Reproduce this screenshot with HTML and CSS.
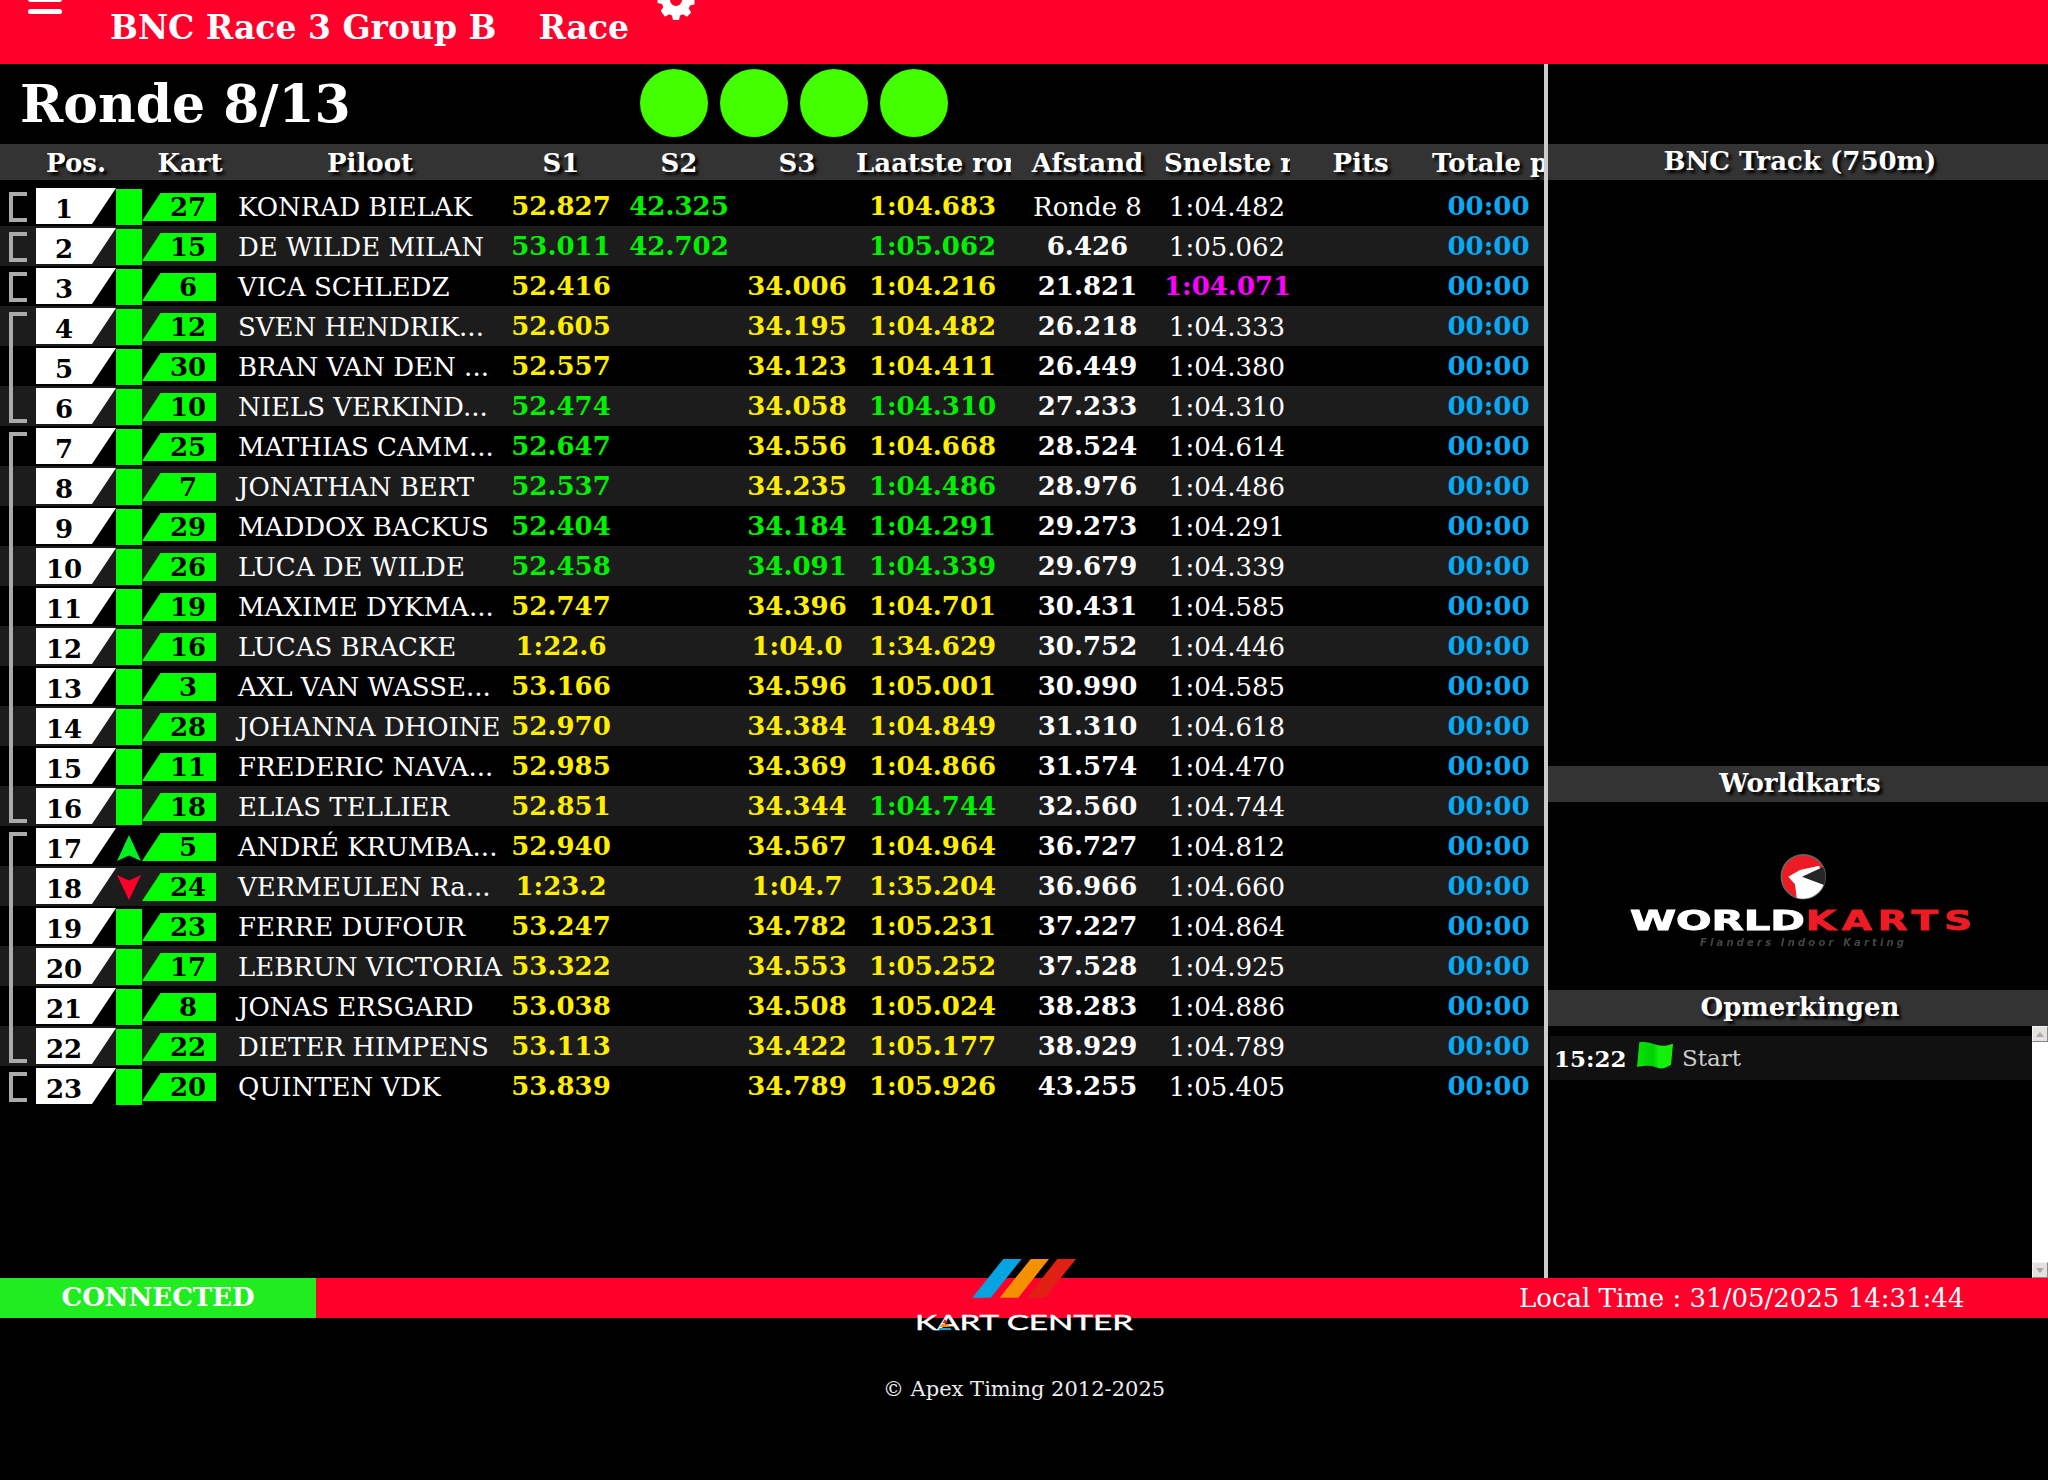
FILE: index.html
```html
<!DOCTYPE html>
<html lang="nl">
<head>
<meta charset="utf-8">
<title>Apex Timing</title>
<link rel="stylesheet" href="styles.css">
</head>
<body>
<div class="page">
<header class="topbar">
  <div class="burger"><span></span><span></span><span></span></div>
  <div class="title race-name">BNC Race 3 Group B</div>
  <div class="title session">Race</div>
  <svg class="gear" viewBox="0 0 34 34"><path fill="#fff" fill-rule="evenodd" d="M14 0h6l1 4.500 3 1.300 4-2.500 4.200 4.200-2.500 4 1.300 3 4.500 1v6l-4.500 1-1.300 3 2.500 4-4.200 4.200-4-2.500-3 1.300-1 4.500h-6l-1-4.500-3-1.300-4 2.500L1.800 28l2.500-4-1.300-3L-1.500 20v-6L3 13l1.300-3-2.500-4L6 1.800l4 2.500 3-1.300zM17 11a6 6 0 1 0 0 12 6 6 0 0 0 0-12z"/></svg>
</header>
<main class="main">
  <section class="board">
    <div class="status">
      <h1 class="lap">Ronde 8/13</h1>
      <div class="lights"><i></i><i></i><i></i><i></i></div>
    </div>
    <div class="row head">
      <div class="hc pos-h">Pos.</div><div class="hc kart-h">Kart</div><div class="hc">Piloot</div><div class="hc">S1</div><div class="hc">S2</div><div class="hc">S3</div><div class="hc cut">Laatste ronde</div><div class="hc">Afstand</div><div class="hc cut">Snelste ronde</div><div class="hc">Pits</div><div class="hc cut last">Totale pits</div>
    </div>
    <div class="rows">
      <div class="row"><div class="br one"></div><div class="pos"><b>1</b></div><div class="st"></div><div class="kn"><b>27</b></div><div class="nm">KONRAD BIELAK</div><div class="t y">52.827</div><div class="t g">42.325</div><div class="t"></div><div class="t y lt">1:04.683</div><div class="t w lite">Ronde 8</div><div class="t lite w">1:04.482</div><div class="t"></div><div class="t b">00:00</div></div>
      <div class="row"><div class="br one"></div><div class="pos"><b>2</b></div><div class="st"></div><div class="kn"><b>15</b></div><div class="nm">DE WILDE MILAN</div><div class="t g">53.011</div><div class="t g">42.702</div><div class="t"></div><div class="t g lt">1:05.062</div><div class="t w">6.426</div><div class="t lite w">1:05.062</div><div class="t"></div><div class="t b">00:00</div></div>
      <div class="row"><div class="br one"></div><div class="pos"><b>3</b></div><div class="st"></div><div class="kn"><b>6</b></div><div class="nm">VICA SCHLEDZ</div><div class="t y">52.416</div><div class="t"></div><div class="t y">34.006</div><div class="t y lt">1:04.216</div><div class="t w">21.821</div><div class="t m">1:04.071</div><div class="t"></div><div class="t b">00:00</div></div>
      <div class="row"><div class="br top"></div><div class="pos"><b>4</b></div><div class="st"></div><div class="kn"><b>12</b></div><div class="nm">SVEN HENDRIK...</div><div class="t y">52.605</div><div class="t"></div><div class="t y">34.195</div><div class="t y lt">1:04.482</div><div class="t w">26.218</div><div class="t lite w">1:04.333</div><div class="t"></div><div class="t b">00:00</div></div>
      <div class="row"><div class="br mid"></div><div class="pos"><b>5</b></div><div class="st"></div><div class="kn"><b>30</b></div><div class="nm">BRAN VAN DEN ...</div><div class="t y">52.557</div><div class="t"></div><div class="t y">34.123</div><div class="t y lt">1:04.411</div><div class="t w">26.449</div><div class="t lite w">1:04.380</div><div class="t"></div><div class="t b">00:00</div></div>
      <div class="row"><div class="br bot"></div><div class="pos"><b>6</b></div><div class="st"></div><div class="kn"><b>10</b></div><div class="nm">NIELS VERKIND...</div><div class="t g">52.474</div><div class="t"></div><div class="t y">34.058</div><div class="t g lt">1:04.310</div><div class="t w">27.233</div><div class="t lite w">1:04.310</div><div class="t"></div><div class="t b">00:00</div></div>
      <div class="row"><div class="br top"></div><div class="pos"><b>7</b></div><div class="st"></div><div class="kn"><b>25</b></div><div class="nm">MATHIAS CAMM...</div><div class="t g">52.647</div><div class="t"></div><div class="t y">34.556</div><div class="t y lt">1:04.668</div><div class="t w">28.524</div><div class="t lite w">1:04.614</div><div class="t"></div><div class="t b">00:00</div></div>
      <div class="row"><div class="br mid"></div><div class="pos"><b>8</b></div><div class="st"></div><div class="kn"><b>7</b></div><div class="nm">JONATHAN BERT</div><div class="t g">52.537</div><div class="t"></div><div class="t y">34.235</div><div class="t g lt">1:04.486</div><div class="t w">28.976</div><div class="t lite w">1:04.486</div><div class="t"></div><div class="t b">00:00</div></div>
      <div class="row"><div class="br mid"></div><div class="pos"><b>9</b></div><div class="st"></div><div class="kn"><b>29</b></div><div class="nm">MADDOX BACKUS</div><div class="t g">52.404</div><div class="t"></div><div class="t g">34.184</div><div class="t g lt">1:04.291</div><div class="t w">29.273</div><div class="t lite w">1:04.291</div><div class="t"></div><div class="t b">00:00</div></div>
      <div class="row"><div class="br mid"></div><div class="pos"><b>10</b></div><div class="st"></div><div class="kn"><b>26</b></div><div class="nm">LUCA DE WILDE</div><div class="t g">52.458</div><div class="t"></div><div class="t g">34.091</div><div class="t g lt">1:04.339</div><div class="t w">29.679</div><div class="t lite w">1:04.339</div><div class="t"></div><div class="t b">00:00</div></div>
      <div class="row"><div class="br mid"></div><div class="pos"><b>11</b></div><div class="st"></div><div class="kn"><b>19</b></div><div class="nm">MAXIME DYKMA...</div><div class="t y">52.747</div><div class="t"></div><div class="t y">34.396</div><div class="t y lt">1:04.701</div><div class="t w">30.431</div><div class="t lite w">1:04.585</div><div class="t"></div><div class="t b">00:00</div></div>
      <div class="row"><div class="br mid"></div><div class="pos"><b>12</b></div><div class="st"></div><div class="kn"><b>16</b></div><div class="nm">LUCAS BRACKE</div><div class="t y">1:22.6</div><div class="t"></div><div class="t y">1:04.0</div><div class="t y lt">1:34.629</div><div class="t w">30.752</div><div class="t lite w">1:04.446</div><div class="t"></div><div class="t b">00:00</div></div>
      <div class="row"><div class="br mid"></div><div class="pos"><b>13</b></div><div class="st"></div><div class="kn"><b>3</b></div><div class="nm">AXL VAN WASSE...</div><div class="t y">53.166</div><div class="t"></div><div class="t y">34.596</div><div class="t y lt">1:05.001</div><div class="t w">30.990</div><div class="t lite w">1:04.585</div><div class="t"></div><div class="t b">00:00</div></div>
      <div class="row"><div class="br mid"></div><div class="pos"><b>14</b></div><div class="st"></div><div class="kn"><b>28</b></div><div class="nm">JOHANNA DHOINE</div><div class="t y">52.970</div><div class="t"></div><div class="t y">34.384</div><div class="t y lt">1:04.849</div><div class="t w">31.310</div><div class="t lite w">1:04.618</div><div class="t"></div><div class="t b">00:00</div></div>
      <div class="row"><div class="br mid"></div><div class="pos"><b>15</b></div><div class="st"></div><div class="kn"><b>11</b></div><div class="nm">FREDERIC NAVA...</div><div class="t y">52.985</div><div class="t"></div><div class="t y">34.369</div><div class="t y lt">1:04.866</div><div class="t w">31.574</div><div class="t lite w">1:04.470</div><div class="t"></div><div class="t b">00:00</div></div>
      <div class="row"><div class="br bot"></div><div class="pos"><b>16</b></div><div class="st"></div><div class="kn"><b>18</b></div><div class="nm">ELIAS TELLIER</div><div class="t y">52.851</div><div class="t"></div><div class="t y">34.344</div><div class="t g lt">1:04.744</div><div class="t w">32.560</div><div class="t lite w">1:04.744</div><div class="t"></div><div class="t b">00:00</div></div>
      <div class="row"><div class="br top"></div><div class="pos"><b>17</b></div><div class="st none"><svg class="arrow" viewBox="0 0 24 26"><path fill="#00f020" d="M12 0 24 26 12 20.500 0 26z"/></svg></div><div class="kn"><b>5</b></div><div class="nm">ANDRÉ KRUMBA...</div><div class="t y">52.940</div><div class="t"></div><div class="t y">34.567</div><div class="t y lt">1:04.964</div><div class="t w">36.727</div><div class="t lite w">1:04.812</div><div class="t"></div><div class="t b">00:00</div></div>
      <div class="row"><div class="br mid"></div><div class="pos"><b>18</b></div><div class="st none"><svg class="arrow" viewBox="0 0 24 26"><path fill="#ff002b" d="M12 25 24 0 12 5.500 0 0z"/></svg></div><div class="kn"><b>24</b></div><div class="nm">VERMEULEN Ra...</div><div class="t y">1:23.2</div><div class="t"></div><div class="t y">1:04.7</div><div class="t y lt">1:35.204</div><div class="t w">36.966</div><div class="t lite w">1:04.660</div><div class="t"></div><div class="t b">00:00</div></div>
      <div class="row"><div class="br mid"></div><div class="pos"><b>19</b></div><div class="st"></div><div class="kn"><b>23</b></div><div class="nm">FERRE DUFOUR</div><div class="t y">53.247</div><div class="t"></div><div class="t y">34.782</div><div class="t y lt">1:05.231</div><div class="t w">37.227</div><div class="t lite w">1:04.864</div><div class="t"></div><div class="t b">00:00</div></div>
      <div class="row"><div class="br mid"></div><div class="pos"><b>20</b></div><div class="st"></div><div class="kn"><b>17</b></div><div class="nm">LEBRUN VICTORIA</div><div class="t y">53.322</div><div class="t"></div><div class="t y">34.553</div><div class="t y lt">1:05.252</div><div class="t w">37.528</div><div class="t lite w">1:04.925</div><div class="t"></div><div class="t b">00:00</div></div>
      <div class="row"><div class="br mid"></div><div class="pos"><b>21</b></div><div class="st"></div><div class="kn"><b>8</b></div><div class="nm">JONAS ERSGARD</div><div class="t y">53.038</div><div class="t"></div><div class="t y">34.508</div><div class="t y lt">1:05.024</div><div class="t w">38.283</div><div class="t lite w">1:04.886</div><div class="t"></div><div class="t b">00:00</div></div>
      <div class="row"><div class="br bot"></div><div class="pos"><b>22</b></div><div class="st"></div><div class="kn"><b>22</b></div><div class="nm">DIETER HIMPENS</div><div class="t y">53.113</div><div class="t"></div><div class="t y">34.422</div><div class="t y lt">1:05.177</div><div class="t w">38.929</div><div class="t lite w">1:04.789</div><div class="t"></div><div class="t b">00:00</div></div>
      <div class="row"><div class="br one"></div><div class="pos"><b>23</b></div><div class="st"></div><div class="kn"><b>20</b></div><div class="nm">QUINTEN VDK</div><div class="t y">53.839</div><div class="t"></div><div class="t y">34.789</div><div class="t y lt">1:05.926</div><div class="t w">43.255</div><div class="t lite w">1:05.405</div><div class="t"></div><div class="t b">00:00</div></div>
    </div>
  </section>
  <aside class="side">
    <div class="spacer-top"></div>
    <h2 class="sh">BNC Track (750m)</h2>
    <div class="track"></div>
    <h2 class="sh">Worldkarts</h2>
    <div class="sponsor">
      <svg class="wk" viewBox="0 0 500 188" width="500" height="188">
        <circle cx="255.300" cy="74.700" r="22" fill="#ed1c24" stroke="#666" stroke-width="1.500"/>
        <path fill="#fff" d="M271.300 63.700 252 68 240.300 74.700 247 82.300 248.700 95.700A22 22 0 0 0 275.500 83z"/>
        <path fill="#262626" d="M275 65 254 74.700 276 83A22 22 0 0 0 275 65z"/>
        <text class="wk-w" x="82" y="128" textLength="175" lengthAdjust="spacingAndGlyphs">WORLD</text>
        <text class="wk-r" x="258" y="128" textLength="172" lengthAdjust="spacingAndGlyphs">KARTS</text>
        <text class="wk-s" x="152" y="144" textLength="204" lengthAdjust="spacing">Flanders Indoor Karting</text>
      </svg>
    </div>
    <h2 class="sh">Opmerkingen</h2>
    <div class="notes">
      <div class="list">
        <div class="note"><b class="note-t">15:22</b>
          <svg class="flag" viewBox="0 0 36 27"><defs><linearGradient id="fg"><stop offset="0" stop-color="#06e406"/><stop offset=".45" stop-color="#00d000"/><stop offset=".6" stop-color="#10f010"/><stop offset="1" stop-color="#16ee00"/></linearGradient></defs><path fill="url(#fg)" d="M2.300 .3C8-.5 13 .5 20 3 26 4.500 31 3.500 36 1.700L34 22.700C29 26 24 27.500 20 25.500 14 22.700 6 23.500 0 25z"/></svg>
          <span class="note-x">Start</span></div>
      </div>
      <div class="sb"><span class="sb-btn up"></span><span class="sb-btn down"></span></div>
    </div>
  </aside>
</main>
<footer class="bottombar">
  <div class="conn">CONNECTED</div>
  <div class="clock">Local Time : 31/05/2025 14:31:44</div>
  <svg class="kc" viewBox="0 0 240 74" width="240" height="74">
    <polygon fill="#04a3e2" points="103.300,0 121.700,0 90.700,38.700 72.300,38.700"/>
    <polygon fill="#f59000" points="130.700,0 149,0 118.300,38.700 99.700,38.700"/>
    <polygon fill="#e21f14" points="157.300,0 176,0 145,38.700 126.700,38.700"/>
    <text class="kc-t" x="15" y="71" textLength="218" lengthAdjust="spacingAndGlyphs">KART CENTER</text>
    <polygon fill="#e21f14" points="45,60 47.500,64 42.500,64"/>
    <polygon fill="#f59000" points="42,65 48,65 50,68 40,68"/>
    <polygon fill="#04a3e2" points="39.500,69 50.500,69 51.500,71 38.500,71"/>
  </svg>
</footer>
<p class="copy">© Apex Timing 2012-2025</p>
</div>
</body>
</html>
```
FILE: styles.css
```css
* { box-sizing: border-box; }
html, body { margin: 0; padding: 0; background: #000; }
body { font-family: "DejaVu Serif", serif; color: #fff; }
.page { width: 2048px; height: 1480px; overflow: hidden; position: relative; }

.topbar { height: 64px; background: #ff002b; display: flex; align-items: flex-start; overflow: hidden; position: relative; }
.burger { width: 34px; margin: -15px 0 0 28px; display: flex; flex-direction: column; gap: 7px; }
.burger span { display: block; height: 5px; background: #fff; border-radius: 3px; }
.title { font-size: 33px; font-weight: bold; line-height: 40px; margin-top: 8px; white-space: nowrap; }
.race-name { margin-left: 48px; }
.session { margin-left: 42px; }
.gear { position: absolute; left: 659px; top: -17px; width: 34px; height: 34px; overflow: visible; }

.main { display: flex; height: 1214px; }
.board { width: 1544px; flex: none; }
.status { height: 80px; display: flex; }
.lap { margin: 0 0 0 20px; width: 620px; font-size: 52px; font-weight: bold; line-height: 80px; white-space: nowrap; }
.lights { display: flex; gap: 12px; padding-top: 5px; }
.lights i { display: block; width: 68px; height: 68px; border-radius: 50%; background: #44ff00; }

.row { display: grid; grid-template-columns: 36px 80px 26px 96px 264px 118px 118px 118px 155px 153px 126px 141px 113px; height: 40px; align-items: start; }
.rows { padding-top: 6px; }
.rows .row:nth-child(even) { background: #1c1c1c; }
.head { height: 36px; background: #333; }
.pos-h { grid-column: 2; }
.kart-h { grid-column: 4; }
.hc { font-size: 26px; font-weight: bold; line-height: 36px; padding-top: 1px; text-align: center; white-space: nowrap; overflow: hidden; text-shadow: 3px 3px 3px #000; }
.hc.cut { text-align: left; }
.hc.last { padding-left: 1px; }

.br { width: 18px; margin-left: 9px; border-left: 4px solid #aaa; }
.br.one { height: 30px; margin-top: 6px; border-top: 4px solid #aaa; border-bottom: 4px solid #aaa; }
.br.top { height: 34px; margin-top: 6px; border-top: 4px solid #aaa; }
.br.mid { height: 40px; }
.br.bot { height: 37px; border-bottom: 4px solid #aaa; }

.pos { height: 36px; margin-top: 2px; background: #fff; clip-path: polygon(0 0, 100% 0, 70% 100%, 0 100%); }
.pos b { display: block; width: 56px; text-align: center; color: #000; font-size: 26px; line-height: 38px; margin-top: 2px; }
.st { height: 36px; margin-top: 3px; background: #00ff00; }
.st.none { background: none; }
.arrow { display: block; width: 24px; height: 26px; margin: 6px 0 0 1px; }
.kn { width: 74px; height: 28px; margin-top: 7px; background: #00ff00; clip-path: polygon(25% 0, 100% 0, 100% 100%, 0 100%); text-align: center; padding-left: 28px; padding-right: 10px; }
.kn b { display: block; color: #000; font-size: 26px; line-height: 28px; }
.nm { font-size: 26px; line-height: 42px; white-space: nowrap; color: #fff; }
.t { font-size: 26px; font-weight: bold; line-height: 40px; text-align: center; white-space: nowrap; }
.t.lite { font-weight: normal; line-height: 42px; }
.t.lt { padding-right: 2px; }
.y { color: #ffee00; }
.g { color: #00f000; }
.w { color: #fff; }
.m { color: #ff00ff; }
.t.b { color: #0aa8f0; padding-left: 2px; }

.side { width: 504px; flex: none; border-left: 4px solid #ccc; display: flex; flex-direction: column; }
.spacer-top { height: 80px; flex: none; }
.sh { margin: 0; height: 36px; flex: none; background: #333; font-size: 26px; line-height: 35px; padding-left: 4px; text-align: center; font-weight: bold; text-shadow: 3px 3px 3px #000; }
.track { height: 586px; flex: none; }
.sponsor { height: 188px; flex: none; overflow: hidden; }
.wk { display: block; filter: blur(.6px); }
.wk-w, .wk-r { font-family: "DejaVu Sans", sans-serif; font-weight: bold; font-size: 27px; stroke-width: .9px; }
.wk-w { fill: #fff; stroke: #fff; }
.wk-r { fill: #ed1c24; stroke: #ed1c24; letter-spacing: 4px; }
.wk-s { font-family: "DejaVu Sans", sans-serif; font-style: italic; font-size: 10px; font-weight: bold; fill: #444; }
.notes { flex: 1; display: flex; min-height: 0; }
.list { flex: 1; padding: 10px 0 0 2px; }
.note { height: 44px; background: #111; display: flex; align-items: center; padding-left: 4px; }
.note-t { font-size: 23px; }
.flag { width: 36px; height: 27px; margin: -5px 0 0 10px; }
.note-x { font-size: 23px; color: #ccc; margin-left: 9.500px; }
.sb { width: 16px; flex: none; background: #fff; display: flex; flex-direction: column; justify-content: space-between; }
.sb-btn { display: block; width: 16px; height: 16px; background: #e4e2dc; border: 1px solid #f4f4f4; border-right-color: #888; border-bottom-color: #888; position: relative; }
.sb-btn::after { content: ""; position: absolute; left: 3px; border-left: 4px solid transparent; border-right: 4px solid transparent; }
.up::after { top: 5px; border-bottom: 5px solid #aaa; }
.down::after { top: 5px; border-top: 5px solid #aaa; }

.bottombar { height: 40px; background: #ff002b; display: flex; justify-content: space-between; position: relative; }
.conn { width: 316px; background: #1fed1f; font-size: 26px; font-weight: bold; line-height: 38px; text-align: center; }
.clock { width: 529px; font-size: 26px; line-height: 40px; text-align: left; white-space: nowrap; }
.kc { position: absolute; left: 900px; top: -19px; }
.kc-t { font-family: "Lato", sans-serif; font-size: 22px; fill: #fff; stroke: #fff; stroke-width: .4px; }
.copy { margin: 59px 0 0; text-align: center; font-size: 21px; line-height: 24px; color: #eee; }
```
